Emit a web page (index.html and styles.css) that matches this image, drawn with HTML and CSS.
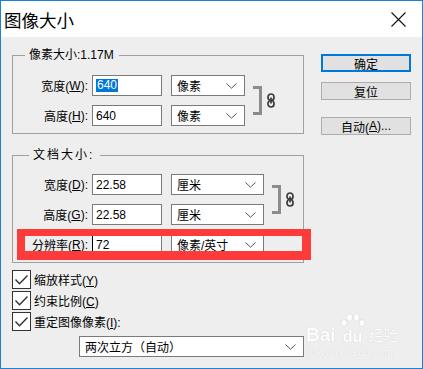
FILE: index.html
```html
<!DOCTYPE html>
<html lang="zh-CN">
<head>
<meta charset="utf-8">
<title>图像大小</title>
<link rel="stylesheet" href="styles.css">
</head>
<body>
<div class="window">
  <div class="titlebar">
    <span class="title">图像大小</span>
    <svg class="close" width="15" height="15" viewBox="0 0 15 15"><path d="M0.5 0.5L14.5 14.5M14.5 0.5L0.5 14.5" stroke="#111" stroke-width="1.1" fill="none"/></svg>
  </div>
  <div class="content">
    <div class="left">
      <fieldset class="group g1">
        <legend>像素大小:1.17M</legend>
        <div class="rows">
          <div class="label">宽度(<u>W</u>):</div>
          <div class="field"><span class="hl">640</span></div>
          <div class="select"><span>像素</span><svg class="chev" width="11" height="6" viewBox="0 0 11 6"><path d="M0.5 0.5L5.5 5.2L10.5 0.5" stroke="#555" stroke-width="1" fill="none"/></svg></div>
          <div class="bracket"></div>
          <svg class="link" width="8" height="15" viewBox="0 0 8 15"><rect x="1" y="1" width="6" height="6.5" rx="3" fill="none" stroke="#3a3a3a" stroke-width="1.7"/><rect x="1" y="7.5" width="6" height="6.5" rx="3" fill="none" stroke="#3a3a3a" stroke-width="1.7"/><path d="M4 4.5V10.5" stroke="#3a3a3a" stroke-width="1.7"/></svg>
          <div class="label">高度(<u>H</u>):</div>
          <div class="field">640</div>
          <div class="select"><span>像素</span><svg class="chev" width="11" height="6" viewBox="0 0 11 6"><path d="M0.5 0.5L5.5 5.2L10.5 0.5" stroke="#555" stroke-width="1" fill="none"/></svg></div>
        </div>
      </fieldset>
      <fieldset class="group g2">
        <legend>文档大小:</legend>
        <div class="rows">
          <div class="label">宽度(<u>D</u>):</div>
          <div class="field">22.58</div>
          <div class="select"><span>厘米</span><svg class="chev" width="11" height="6" viewBox="0 0 11 6"><path d="M0.5 0.5L5.5 5.2L10.5 0.5" stroke="#555" stroke-width="1" fill="none"/></svg></div>
          <div class="bracket"></div>
          <svg class="link" width="8" height="15" viewBox="0 0 8 15"><rect x="1" y="1" width="6" height="6.5" rx="3" fill="none" stroke="#3a3a3a" stroke-width="1.7"/><rect x="1" y="7.5" width="6" height="6.5" rx="3" fill="none" stroke="#3a3a3a" stroke-width="1.7"/><path d="M4 4.5V10.5" stroke="#3a3a3a" stroke-width="1.7"/></svg>
          <div class="label">高度(<u>G</u>):</div>
          <div class="field">22.58</div>
          <div class="select"><span>厘米</span><svg class="chev" width="11" height="6" viewBox="0 0 11 6"><path d="M0.5 0.5L5.5 5.2L10.5 0.5" stroke="#555" stroke-width="1" fill="none"/></svg></div>
          <div class="label">分辨率(<u>R</u>):</div>
          <div class="field cursor">72</div>
          <div class="select"><span>像素/英寸</span><svg class="chev" width="11" height="6" viewBox="0 0 11 6"><path d="M0.5 0.5L5.5 5.2L10.5 0.5" stroke="#555" stroke-width="1" fill="none"/></svg></div>
          <div class="mark"></div>
        </div>
      </fieldset>
      <div class="checks">
        <div class="check"><svg class="box" width="19" height="19" viewBox="0 0 19 19"><rect x="0.5" y="0.5" width="18" height="18" fill="#fff" stroke="#333"/><path d="M3.5 9.5L7.5 13.8L15.5 5.5" stroke="#333" stroke-width="1.4" fill="none"/></svg><span>缩放样式(<u>Y</u>)</span></div>
        <div class="check"><svg class="box" width="19" height="19" viewBox="0 0 19 19"><rect x="0.5" y="0.5" width="18" height="18" fill="#fff" stroke="#333"/><path d="M3.5 9.5L7.5 13.8L15.5 5.5" stroke="#333" stroke-width="1.4" fill="none"/></svg><span>约束比例(<u>C</u>)</span></div>
        <div class="check"><svg class="box" width="19" height="19" viewBox="0 0 19 19"><rect x="0.5" y="0.5" width="18" height="18" fill="#fff" stroke="#333"/><path d="M3.5 9.5L7.5 13.8L15.5 5.5" stroke="#333" stroke-width="1.4" fill="none"/></svg><span>重定图像像素(<u>I</u>):</span></div>
      </div>
      <div class="select bottom-select"><span>两次立方（自动）</span><svg class="chev" width="11" height="6" viewBox="0 0 11 6"><path d="M0.5 0.5L5.5 5.2L10.5 0.5" stroke="#555" stroke-width="1" fill="none"/></svg></div>
    </div>
    <div class="right">
      <div class="btn default">确定</div>
      <div class="btn">复位</div>
      <div class="btn auto">自动(<u>A</u>)...</div>
    </div>
  </div>
  <div class="watermark">
    <div class="wm-top">
      <span class="wm-bai">Bai</span>
      <span class="wm-paw">
        <svg width="28" height="16" viewBox="0 0 28 16"><ellipse cx="5" cy="10" rx="3" ry="3.6" fill="#fff" stroke="#ddd" stroke-width="0.8"/><ellipse cx="10.5" cy="4.5" rx="3" ry="3.8" fill="#fff" stroke="#ddd" stroke-width="0.8"/><ellipse cx="17.5" cy="4.5" rx="3" ry="3.8" fill="#fff" stroke="#ddd" stroke-width="0.8"/><ellipse cx="23" cy="10" rx="3" ry="3.6" fill="#fff" stroke="#ddd" stroke-width="0.8"/></svg>
        <span class="wm-du">du</span>
      </span>
      <span class="wm-jy">经验</span>
    </div>
    <div class="wm-url">jingyan.baidu.com</div>
  </div>
</div>
</body>
</html>
```

FILE: styles.css
```css
* { box-sizing: border-box; }
html, body { margin: 0; padding: 0; }
body {
  font-family: "Liberation Sans", "Noto Sans CJK SC", sans-serif;
  font-size: 12px;
  color: #000;
  background: #fff;
}
.window {
  position: relative;
  width: 423px;
  height: 369px;
  border: 1px solid #1883d7;
  background: #eeeeee;
  display: flex;
  flex-direction: column;
  overflow: hidden;
}
.titlebar {
  flex: none;
  height: 36px;
  background: #fff;
  display: flex;
  align-items: center;
  justify-content: space-between;
  padding: 0 16px 0 3px;
}
.title {
  font-family: "Noto Sans CJK SC", sans-serif;
  font-size: 17.5px;
}
.content {
  display: flex;
  padding-left: 11px;
}
.left {
  width: 292px;
  display: flex;
  flex-direction: column;
}
.right {
  width: 90px;
  margin-left: 17px;
  margin-top: 17px;
  display: flex;
  flex-direction: column;
}
.group {
  margin: 0;
  min-width: 0;
  border: 1px solid #a0a0a0;
  padding: 0 0 7px 0;
}
.g1 { margin-top: 10px; padding-top: 11px; }
.g2 { margin-top: 13px; padding-top: 10px; }
legend {
  line-height: 17px;
  padding: 0 5px 0 4px;
  margin-left: 12px;
}
.g2 legend {
  margin-left: 16px;
  letter-spacing: 2px;
  padding-right: 6px;
}
.rows {
  position: relative;
  display: grid;
  grid-template-columns: repeat(5, max-content);
  grid-auto-rows: 21px;
  row-gap: 9px;
}
.label {
  width: 79px;
  padding-right: 4px;
  display: flex;
  align-items: center;
  justify-content: flex-end;
  white-space: nowrap;
}
.field {
  width: 70px;
  background: #fff;
  border: 1px solid #7a7a7a;
  display: flex;
  align-items: center;
  padding-left: 3px;
}
.field.cursor { border-left-color: #000; }
.hl {
  background: #0078d7;
  color: #fff;
  line-height: 13px;
  padding: 0 1px;
}
.select {
  width: 74px;
  margin-left: 9px;
  background: #fff;
  border: 1px solid #7a7a7a;
  display: flex;
  align-items: center;
  justify-content: space-between;
  padding: 0 7px 0 5px;
  white-space: nowrap;
}
.g2 .select { width: 93px; }
.chev { flex: none; }
.bracket {
  grid-column: 4;
  grid-row: 1 / span 2;
  width: 9px;
  margin: 11px 0 11px 8px;
  border: 3px solid #8c8c8c;
  border-left: 0;
}
.link {
  grid-column: 5;
  grid-row: 1 / span 2;
  align-self: center;
  margin-left: 5px;
}
.mark {
  position: absolute;
  left: 4px;
  top: 55px;
  width: 294px;
  height: 31px;
  border-style: solid;
  border-color: #fd3b3b;
  border-width: 7px 9px 9px 8px;
}
.checks {
  margin-top: 7px;
  display: flex;
  flex-direction: column;
  gap: 2px;
}
.check {
  height: 19px;
  display: flex;
  align-items: center;
}
.box { flex: none; display: block; }
.check span { margin-left: 3px; }
.bottom-select {
  width: 225px;
  height: 21px;
  margin: 5px 0 0 67px;
}
.btn {
  height: 18px;
  background: #e1e1e1;
  border: 1px solid #adadad;
  display: flex;
  align-items: center;
  justify-content: center;
}
.btn.default { border: 2px solid #0078d7; }
.btn + .btn { margin-top: 10px; }
.btn.auto { margin-top: 17px; }
.watermark {
  position: absolute;
  left: 305px;
  top: 312px;
  color: #fff;
  text-shadow: 0 0 1px rgba(0,0,0,0.18);
  opacity: 0.9;
}
.wm-top {
  display: flex;
  align-items: flex-end;
  height: 31px;
}
.wm-bai {
  font-family: "Liberation Sans", sans-serif;
  font-weight: bold;
  font-size: 19px;
  line-height: 18px;
}
.wm-paw {
  position: relative;
  width: 30px;
  height: 31px;
  margin-left: 2px;
  display: flex;
  flex-direction: column;
  align-items: center;
}
.wm-du {
  font-family: "Liberation Sans", sans-serif;
  font-weight: bold;
  font-size: 16px;
  line-height: 15px;
}
.wm-jy {
  font-family: "Noto Sans CJK SC", sans-serif;
  font-size: 15px;
  line-height: 18px;
  margin-left: 1px;
}
.wm-url {
  font-family: "Liberation Sans", sans-serif;
  font-size: 10.5px;
  margin-top: 2px;
  margin-left: 2px;
}
```
